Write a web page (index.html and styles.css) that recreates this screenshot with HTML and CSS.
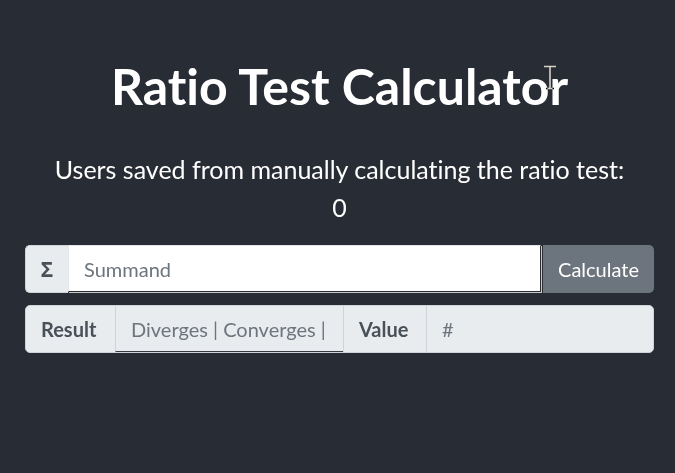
FILE: index.html
```html
<!DOCTYPE html>
<html lang="en">
<head>
<meta charset="utf-8">
<title>Ratio Test Calculator</title>
<link rel="stylesheet" href="styles.css">
</head>
<body>
<div class="app">
  <h1 class="title">Ratio Test Calculator</h1>
  <p class="counter">Users saved from manually calculating the ratio test:<br>0</p>
  <div class="group group-input">
    <span class="addon">Σ</span>
    <input class="field field-main" type="text" placeholder="Summand">
    <button class="btn" type="button">Calculate</button>
  </div>
  <div class="group group-result">
    <span class="label">Result</span>
    <input class="field field-result" type="text" placeholder="Diverges | Converges |" readonly>
    <span class="label label-value">Value</span>
    <input class="field field-value" type="text" placeholder="#" readonly>
  </div>
</div>
<svg class="cursor" width="16" height="26" viewBox="0 0 16 26" aria-hidden="true">
  <path d="M1 1.5h12M7 1.5v22M3 23.5h8" stroke="#fff" stroke-width="1.6" fill="none"/>
</svg>
</body>
</html>
```
FILE: styles.css
```css
* { box-sizing: border-box; }

html, body {
  margin: 0;
  height: 100%;
  background: #282c34;
}

body {
  font-family: "Lato", "Open Sans", "Noto Sans", sans-serif;
  font-variant-ligatures: none;
  color: #fff;
}

.app {
  padding: 56px 21px 0 25px;
  display: flex;
  flex-direction: column;
}

.title {
  margin: 0;
  font-size: 50px;
  line-height: 60px;
  font-weight: 700;
  text-align: center;
}

.counter {
  margin: 34px 0 0;
  font-size: 25px;
  line-height: 38px;
  text-align: center;
}

.group {
  display: flex;
  height: 48px;
  font-size: 20px;
}

.group-input {
  margin-top: 19px;
}

.group-result {
  margin-top: 12px;
  background: #e9ecef;
  border: 1px solid #ced4da;
  border-radius: 5px;
}

.addon {
  width: 43px;
  display: flex;
  align-items: center;
  justify-content: center;
  background: #e9ecef;
  border: 1px solid #ced4da;
  border-right: 0;
  border-radius: 5px 0 0 5px;
  color: #495057;
  font-weight: 700;
  font-family: "Open Sans", "Noto Sans", sans-serif;
  font-size: 21px;
}

.field {
  font-family: "Lato", "Open Sans", "Noto Sans", sans-serif;
  font-variant-ligatures: none;
  font-size: 20px;
  color: #495057;
  padding: 0 15px;
  margin: 0;
  outline: none;
  min-width: 0;
}

.field::placeholder {
  color: #6c757d;
  opacity: 1;
}

.field-main {
  flex: 1;
  background: #fff;
  border: 1px solid #e3e6ea;
  border-right-color: #2b2b2b;
  border-bottom-color: #2b2b2b;
  box-shadow: 1px 1px 0 #c8ccd0;
  height: 47px;
}

.btn {
  margin-left: 2px;
  width: 111px;
  height: 48px;
  border: 0;
  border-radius: 0 5px 5px 0;
  background: #6c757d;
  color: #fff;
  font-family: "Lato", "Open Sans", "Noto Sans", sans-serif;
  font-size: 20px;
  padding: 0;
}

.label {
  width: 89px;
  display: flex;
  align-items: center;
  padding-left: 15px;
  color: #495057;
  font-weight: 700;
}

.label-value {
  width: 83px;
  border-left: 1px solid #ced4da;
}

.field-result {
  width: 228px;
  background: #e9ecef;
  border: 0;
  border-left: 1px solid #ced4da;
  border-bottom: 1px solid #343a40;
  height: 46px;
}

.field-value {
  flex: 1;
  background: transparent;
  border: 0;
  border-left: 1px solid #ced4da;
  height: 46px;
  border-radius: 0 5px 5px 0;
}

.cursor {
  position: absolute;
  left: 543px;
  top: 65px;
  mix-blend-mode: difference;
}
```
